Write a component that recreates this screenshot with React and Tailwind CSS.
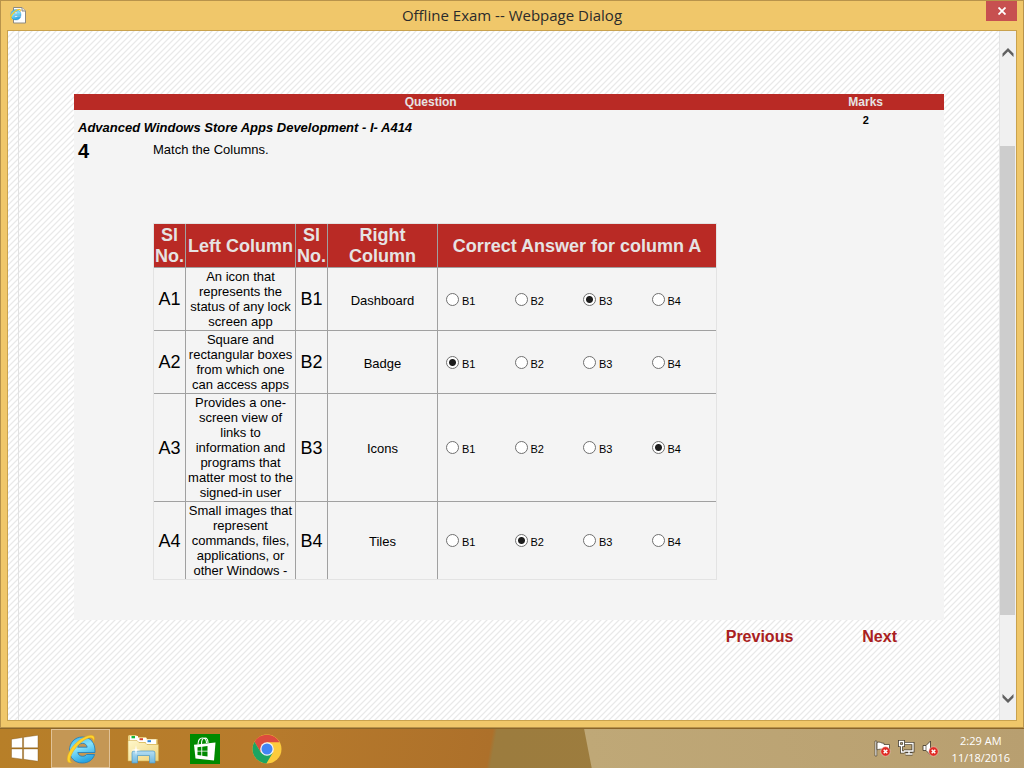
import { useState } from "react";

const rows = [
  { a: "A1", left: "An icon that represents the status of any lock screen app", b: "B1", right: "Dashboard", answer: "B3" },
  { a: "A2", left: "Square and rectangular boxes from which one can access apps", b: "B2", right: "Badge", answer: "B1" },
  { a: "A3", left: "Provides a one-screen view of links to information and programs that matter most to the signed-in user", b: "B3", right: "Icons", answer: "B4" },
  { a: "A4", left: "Small images that represent commands, files, applications, or other Windows -", b: "B4", right: "Tiles", answer: "B2" },
];

const options = ["B1", "B2", "B3", "B4"];

function ExplorerMark({ id }) {
  return (
    <>
      <defs>
        <linearGradient id={id + "-blue"} x1="0" y1="0" x2="0.4" y2="1">
          <stop offset="0" stopColor="#3db4ea" />
          <stop offset="0.5" stopColor="#86e2fb" />
          <stop offset="1" stopColor="#2ba6e2" />
        </linearGradient>
      </defs>
      <path
        d="M30 19.500H12.800c.5 2.500 2.200 3.800 4.700 3.800 1.900 0 3.300-.7 4.100-1.800h8C28 26.700 23.500 30 17.300 30 9.800 30 4.500 24.800 4.500 17.300S9.800 4 17.300 4C25.500 4 30.500 9.700 30 19.500zM12.700 14.200h9.500c-.4-2.500-2.200-3.900-4.700-3.900-2.600 0-4.300 1.500-4.800 3.900z"
        fill={"url(#" + id + "-blue)"}
        stroke="#1a7bbb"
        strokeWidth="0.800"
      />
      <path
        d="M28.500 9.500C30.500 4.500 29.300 1.700 25 2.300 17 3.500 6.800 12 3.300 21 1 27 2.200 31 7.500 29.500 4.800 28.900 4.500 26.300 6.300 22 9.500 14.500 18 6.300 24 4.900c3.300-.7 4.700 1.100 4.500 4.600z"
        fill="#ffd42a"
        stroke="#e0a31a"
        strokeWidth="0.500"
      />
    </>
  );
}

function PageIcon() {
  return (
    <svg width="16" height="17" viewBox="0 0 16 17" aria-hidden="true">
      <path d="M3.500 .5h8.500l3.500 3.500v12h-12z" fill="#fff" stroke="#8d8a80" />
      <path d="M12 .5V4h3.500" fill="#e6e6e6" stroke="#8d8a80" />
      <g transform="translate(-1 1) scale(0.400)">
        <ExplorerMark id="page" />
      </g>
    </svg>
  );
}

function Chevron({ down }) {
  return (
    <svg width="12" height="10" viewBox="0 0 12 10" aria-hidden="true">
      <path d={down ? "M.5 0v3.500L6 9l5.500-5.500V0L6 5.500z" : "M.5 10V6.500L6 1l5.500 5.500V10L6 4.500z"} fill="#606060" />
    </svg>
  );
}

function StartIcon() {
  return (
    <svg width="28" height="27" viewBox="0 0 28 27" aria-hidden="true">
      <path d="M.5 4.200 11.500 2.500v10.300H.5zM12.600 2.300 27 .2v12.600H12.600zM.5 13.900h11v10.300L.5 22.700zM12.600 13.900H27v12.400l-14.400-2z" fill="#fff" stroke="#7c5416" strokeWidth="0.400" />
    </svg>
  );
}

function FolderIcon() {
  return (
    <svg width="32" height="30" viewBox="0 0 32 30" aria-hidden="true">
      <defs>
        <linearGradient id="folder" x1="0" y1="0" x2="1" y2="1">
          <stop offset="0" stopColor="#fff8cc" />
          <stop offset="1" stopColor="#efd47c" />
        </linearGradient>
        <linearGradient id="stand" x1="0" y1="0" x2="0" y2="1">
          <stop offset="0" stopColor="#b5def3" />
          <stop offset="1" stopColor="#6db6de" />
        </linearGradient>
      </defs>
      <path d="M1 26V2.500Q1 1 2.500 1H9l2 2h8l1 2h10.500v21z" fill="#e9cf7c" />
      <path d="M3 2h8v5H3z" fill="#fff" />
      <path d="M4.500 2h3.500v2.300H4.500z" fill="#12b83a" />
      <path d="M10.500 4h9v4h-9z" fill="#fff" />
      <path d="M12.500 4.200H16v2h-3.500z" fill="#d9482b" />
      <path d="M19 5.500h10V10H19z" fill="#fff" />
      <path d="M20.500 6.200H24v2h-3.500z" fill="#2f86d8" />
      <path d="M1 6.500h9l2 2h6l2 2h11.500V27H1z" fill="url(#folder)" stroke="#d2ac4b" strokeWidth="0.600" />
      <path d="M5 29V19q0-2 2-2h19q2 0 2 2v10h-5.500v-7.500h-12V29z" fill="url(#stand)" stroke="#4a98c6" strokeWidth="0.700" />
      <path d="M9 11l.8 4.200L14 16l-4.200.8L9 21l-.8-4.200L4 16l4.200-.8z" fill="#fff" />
    </svg>
  );
}

function StoreIcon() {
  return (
    <svg width="30" height="30" viewBox="0 0 30 30" aria-hidden="true">
      <path d="M0 0h30v30H0z" fill="#008a00" />
      <path d="M8 10.500C8 6 9.800 4 12.200 4s4.300 2 4.300 5M11.500 10c0-4 1-6 3.500-6 2 0 3 2 3 5" fill="none" stroke="#fff" strokeWidth="1.100" />
      <path d="M4 10.800 25.500 8.500 24 26.500 5.500 24.500z" fill="#fff" />
      <path d="M7.500 13.300 11.300 12.800v4H7.500zM12.200 12.700 17.500 12v4.800h-5.300zM7.500 17.600h3.800v4L7.500 21zM12.200 17.600h5.300v4.900l-5.300-.7z" fill="#008a00" />
    </svg>
  );
}

function ChromeIcon() {
  return (
    <svg width="30" height="30" viewBox="0 0 30 30" aria-hidden="true">
      <circle cx="15" cy="15" r="14.500" fill="#fccb3c" />
      <path d="M2.440 7.750A14.500 14.500 0 0 1 27.560 8.200H15L8.900 18.500z" fill="#dd4b3e" />
      <path d="M2.440 7.750A14.500 14.500 0 0 0 14.400 29.500L20.900 18.400 15 15 8.900 18.500z" fill="#1da462" />
      <circle cx="15" cy="15" r="6.800" fill="#f4f4f4" />
      <circle cx="15" cy="15" r="5.500" fill="#4285f4" />
    </svg>
  );
}

function ErrorBadge() {
  return (
    <>
      <circle cx="11.500" cy="11.500" r="4.700" fill="#df2b24" stroke="#f6d8d0" strokeWidth="0.500" />
      <path d="M9.700 9.700l3.600 3.600M13.300 9.700l-3.600 3.600" stroke="#fff" strokeWidth="1.500" />
    </>
  );
}

function FlagIcon() {
  return (
    <svg width="17" height="17" viewBox="0 0 17 17" aria-hidden="true">
      <path d="M1 1h1.800v15H1z" fill="#fff" stroke="#4c4333" strokeWidth="0.700" />
      <path d="M3 2.500c3-1.500 4 1 7 .8v1.200h5.500v6.500c-3 .8-4-.5-6-1.200-2-.8-4-.8-6.500 0z" fill="#fff" stroke="#4c4333" strokeWidth="0.800" />
      <ErrorBadge />
    </svg>
  );
}

function NetworkIcon() {
  return (
    <svg width="17" height="17" viewBox="0 0 17 17" aria-hidden="true">
      <path d="M7 3.500h8v7.500H6M11 11v3M7.500 14h7M3.500 6v6h3" fill="none" stroke="#4c4333" strokeWidth="3" />
      <path d="M1.500 1.500h4v4h-4z" fill="none" stroke="#4c4333" strokeWidth="3" />
      <path d="M7 3.500h8v7.500H6M11 11v3M7.500 14h7M3.500 6v6h3M1.500 1.500h4v4h-4z" fill="none" stroke="#fff" strokeWidth="1.300" />
    </svg>
  );
}

function SpeakerIcon() {
  return (
    <svg width="17" height="17" viewBox="0 0 17 17" aria-hidden="true">
      <path d="M1 5.500h3L8.500 1v14L4 10.500H1z" fill="#fff" stroke="#4c4333" strokeWidth="0.900" />
      <path d="M4 5.500v5" stroke="#4c4333" strokeWidth="0.700" />
      <ErrorBadge />
    </svg>
  );
}

function MatchTable() {
  const [answers, setAnswers] = useState(rows.map((row) => row.answer));
  const choose = (index, value) => setAnswers(answers.map((old, i) => (i === index ? value : old)));

  return (
    <table className="w-[564px] table-fixed border-separate border-spacing-0 border border-[#e3e3e3] text-center">
      <colgroup>
        <col className="w-8" />
        <col className="w-[110px]" />
        <col className="w-8" />
        <col className="w-[110px]" />
        <col />
      </colgroup>
      <thead className="bg-[#b92a25] text-lg leading-[21px] text-[#e6e3e3]">
        <tr className="*:border-r *:border-b *:border-[#a0a0a0] *:p-0 *:pt-px *:font-bold *:last:border-r-0">
          <th scope="col">Sl No.</th>
          <th scope="col">Left Column</th>
          <th scope="col">Sl No.</th>
          <th scope="col">Right Column</th>
          <th scope="col">Correct Answer for column A</th>
        </tr>
      </thead>
      <tbody className="text-[13px] leading-[15px] [&>tr:last-child>td]:border-b-0">
        {rows.map((row, index) => (
          <tr key={row.a} className="*:border-r *:border-b *:border-[#a0a0a0] *:p-px *:last:border-r-0">
            <td className="text-lg leading-5">{row.a}</td>
            <td>{row.left}</td>
            <td className="text-lg leading-5">{row.b}</td>
            <td>
              <div className="pt-0.5">{row.right}</div>
            </td>
            <td>
              <div role="radiogroup" aria-label={row.a} className="-mr-px grid grid-cols-4 pl-[3px]">
                {options.map((option) => (
                  <label key={option} className="flex items-center gap-[3px] pl-1 text-[11px]">
                    <input
                      type="radio"
                      name={row.a}
                      value={option}
                      checked={answers[index] === option}
                      onChange={() => choose(index, option)}
                      className="size-[13px] appearance-none rounded-full border border-[#707070] bg-white checked:bg-[radial-gradient(circle,#1d1d1d_3px,#ffffff_4px)]"
                    />
                    <span className="pt-1">{option}</span>
                  </label>
                ))}
              </div>
            </td>
          </tr>
        ))}
      </tbody>
    </table>
  );
}

function ExamPage() {
  return (
    <main className="flex-1 border-l border-[#e2e2e2] px-[55px] pt-[63px] font-['Liberation_Sans',Arial,sans-serif] text-black">
      <section className="bg-[#f4f4f4] pb-10">
        <div className="grid grid-cols-[82fr_18fr] bg-[#b92a25] text-center text-xs leading-4 font-bold text-[#e6e3e3]">
          <div>Question</div>
          <div>Marks</div>
        </div>
        <div className="grid grid-cols-[82fr_18fr]">
          <h1 className="pt-2 pl-1 text-[13px] leading-5 font-bold italic">Advanced Windows Store Apps Development - I- A414</h1>
          <div className="pt-0.5 text-center text-[11px] leading-4 font-bold">2</div>
        </div>
        <div className="flex pl-1">
          <div className="w-[75px] text-xl leading-[26px] font-bold">4</div>
          <div>
            <p className="mb-[61px] text-[13px] leading-6">Match the Columns.</p>
            <MatchTable />
          </div>
        </div>
      </section>
      <nav className="flex justify-end gap-[69px] pt-[5px] pr-[47px] text-base leading-6 font-bold text-[#a92020]">
        <button type="button">Previous</button>
        <button type="button">Next</button>
      </nav>
    </main>
  );
}

function ScrollBar() {
  return (
    <div className="flex w-[17px] flex-col border-l border-[#e4e4e4] bg-[#f0f0f0]">
      <button type="button" aria-label="Scroll up" className="flex h-[42px] items-center justify-center">
        <Chevron />
      </button>
      <div className="flex flex-1 flex-col">
        <div className="grow-[73]" />
        <div className="mr-px grow-[469] bg-[#cdcdcd]" />
        <div className="grow-[63]" />
      </div>
      <button type="button" aria-label="Scroll down" className="flex h-[42px] items-center justify-center">
        <Chevron down />
      </button>
    </div>
  );
}

function Taskbar() {
  return (
    <footer className="flex h-10 items-center justify-between border-t border-[#8a6429] bg-[linear-gradient(79deg,transparent_calc(50%_+_74px),#bfa877_calc(50%_+_75px),#b89f70_100%),linear-gradient(100deg,#b77f28_0%,#b77b2c_25%,#ad702a_calc(50%_-_22px),#9c7c3e_calc(50%_-_18px),#9f7d3d_100%)] font-['Open_Sans','Noto_Sans',sans-serif]">
      <div className="flex h-full items-center">
        <button type="button" aria-label="Start" className="flex w-[51px] justify-center pr-px">
          <StartIcon />
        </button>
        <button type="button" aria-label="Internet Explorer" className="flex h-full w-[59px] items-center justify-center border border-[#e0c298] bg-[#c49755]">
          <svg width="32" height="32" viewBox="0 0 32 32" aria-hidden="true">
            <ExplorerMark id="task" />
          </svg>
        </button>
        <button type="button" aria-label="File Explorer" className="flex w-[65px] justify-center">
          <FolderIcon />
        </button>
        <button type="button" aria-label="Store" className="flex w-[60px] justify-center">
          <StoreIcon />
        </button>
        <button type="button" aria-label="Chrome" className="flex w-[64px] justify-center">
          <ChromeIcon />
        </button>
      </div>
      <div className="flex items-center gap-[7px] pr-3.5">
        <FlagIcon />
        <NetworkIcon />
        <SpeakerIcon />
        <div className="pl-1.5 text-center text-[11px] leading-[17px] text-white">
          <div>2:29 AM</div>
          <div>11/18/2016</div>
        </div>
      </div>
    </footer>
  );
}

export default function App() {
  return (
    <div className="flex min-h-screen flex-col">
      <div className="flex flex-1 flex-col border border-[#b8934b] bg-[#f0c76a] px-1.5 pb-1.5">
        <header className="grid h-[29px] grid-cols-[48px_1fr_48px]">
          <div className="flex items-center pl-[3px]">
            <PageIcon />
          </div>
          <div className="text-center font-['Open_Sans','Noto_Sans',sans-serif] text-[15px] leading-[29px] text-[#2b2b2b]">Offline Exam -- Webpage Dialog</div>
          <button type="button" aria-label="Close" className="flex h-5 w-[31px] items-center justify-center justify-self-end bg-[#c75050]">
            <svg width="8" height="8" viewBox="0 0 8 8" aria-hidden="true">
              <path d="M.5 .5l7 7M7.500 .5l-7 7" stroke="#fff" strokeWidth="1.800" />
            </svg>
          </button>
        </header>
        <div className="flex flex-1 border border-[#c9a24e] bg-white">
          <div className="flex flex-1 bg-[linear-gradient(135deg,#e9e9e9_0%,#ffffff_14%,#ffffff_36%,#e9e9e9_50%,#ffffff_64%,#ffffff_86%,#e9e9e9_100%)] bg-size-[6px_6px] pl-2.5">
            <ExamPage />
          </div>
          <ScrollBar />
        </div>
      </div>
      <Taskbar />
    </div>
  );
}
